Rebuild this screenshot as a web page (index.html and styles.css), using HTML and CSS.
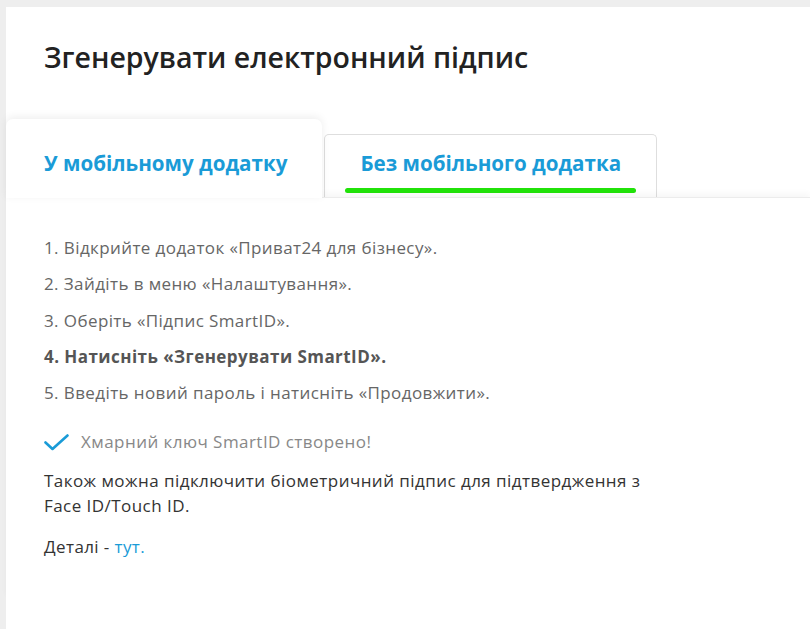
FILE: index.html
```html
<!DOCTYPE html>
<html lang="uk">
<head>
    <meta charset="UTF-8">
    <meta name="viewport" content="width=device-width, initial-scale=1.0">
    <title>Згенерувати електронний підпис</title>
    <link rel="stylesheet" href="styles.css">
</head>
<body>
    <div class="card">
        <h1 class="card-title">Згенерувати електронний підпис</h1>

        <div class="tabs">
            <div class="tab active">У мобільному додатку</div>
            <div class="tab">
                <span class="tab-label">Без мобільного додатка</span>
                <div class="tab-bar"></div>
            </div>
        </div>

        <div class="panel">
            <ol class="steps">
                <li>1. Відкрийте додаток «Приват24 для бізнесу».</li>
                <li>2. Зайдіть в меню «Налаштування».</li>
                <li>3. Оберіть «Підпис SmartID».</li>
                <li class="current">4. Натисніть «Згенерувати SmartID».</li>
                <li>5. Введіть новий пароль і натисніть «Продовжити».</li>
            </ol>

            <div class="done">
                <svg class="done-icon" width="25" height="17" viewBox="0 0 25 17">
                    <polyline points="1.5,8.5 8.5,15 23.5,1.5" fill="none" stroke="#1a9bd7" stroke-width="2.6" stroke-linecap="round" stroke-linejoin="round"/>
                </svg>
                <span>Хмарний ключ SmartID створено!</span>
            </div>

            <p class="note">Також можна підключити біометричний підпис для підтвердження з Face ID/Touch ID.</p>
            <p class="details">Деталі - <a href="#">тут.</a></p>
        </div>
    </div>
</body>
</html>
```

FILE: styles.css
```css
body {
    margin: 0;
    padding: 7px 0 0 6px;
    background: #eeeeee;
    font-family: "Open Sans", "Liberation Sans", sans-serif;
}
.card {
    background: #fff;
    min-height: calc(100vh - 7px);
}
.card-title {
    margin: 0;
    padding: 31px 38px 43px;
    font-size: 28.5px;
    font-weight: 600;
    line-height: 38px;
    color: #222;
}
.tabs {
    display: flex;
    align-items: flex-end;
    gap: 2px;
}
.tab {
    font-size: 20.6px;
    font-weight: 700;
    line-height: 28px;
    color: #1a9bd7;
    background: #fff;
    border: 1px solid #dedede;
    border-bottom: none;
    border-radius: 5px 5px 0 0;
    padding: 14px 20px 4px;
}
.tab.active {
    position: relative;
    z-index: 2;
    border: none;
    border-radius: 7px 7px 0 0;
    padding: 30px 35px 21px 38px;
    margin-bottom: -1px;
    box-shadow: 0 -2px 8px rgba(0,0,0,0.07);
}
.tab-label {
    display: block;
    padding: 0 15px;
    text-align: center;
}
.tab-bar {
    height: 5px;
    margin-top: 11px;
    border-radius: 3px;
    background: #22e30a;
}
.panel {
    position: relative;
    z-index: 1;
    border-top: 1px solid #ececec;
    box-shadow: 0 -4px 6px rgba(0,0,0,0.03);
    padding: 38px 38px 40px;
    font-size: 17px;
    line-height: 24px;
}
.steps {
    list-style: none;
    margin: 0;
    padding: 0;
    color: #666;
    letter-spacing: 0.4px;
}
.steps li {
    margin-bottom: 12.3px;
}
.steps li:last-child {
    margin-bottom: 0;
}
.steps li.current {
    font-weight: 700;
    color: #555;
    letter-spacing: 0.45px;
}
.done {
    display: flex;
    align-items: center;
    gap: 12px;
    margin-top: 25px;
    color: #888;
    letter-spacing: 0.45px;
}
.done-icon {
    flex: none;
}
.note {
    margin: 14px 0 0;
    max-width: 620px;
    line-height: 25px;
    color: #333;
    letter-spacing: 0.45px;
}
.details {
    margin: 16.5px 0 0;
    color: #333;
    letter-spacing: 0.4px;
}
.details a {
    color: #1a9bd7;
    text-decoration: none;
}
```
